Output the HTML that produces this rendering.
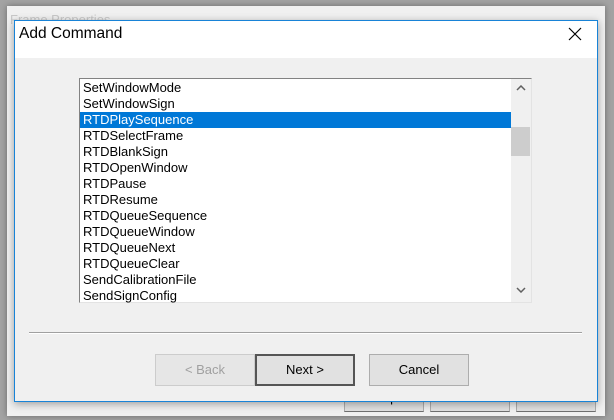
<!DOCTYPE html>
<html><head><style>
body{margin:0;width:614px;height:420px;background:#a3a3a3;position:relative;overflow:hidden;font-family:"Liberation Sans",sans-serif;}
.abs{position:absolute;box-sizing:border-box;}
.pbtn{background:#e1e1e1;border:1px solid #adadad;border-bottom-color:#707070;font-size:13px;text-align:center;line-height:22px;color:#000;}
.btn{background:#e1e1e1;border:1px solid #adadad;font-size:13px;text-align:center;line-height:30px;color:#000;}
.list div{height:16px;line-height:16px;font-size:13px;padding-left:3px;color:#000;white-space:nowrap;}
</style></head><body>
<div class="abs" style="left:7px;top:6px;width:598px;height:410px;background:#f0f0f0;box-shadow:0 0 6px rgba(0,0,0,.35);"></div>
<div class="abs" style="left:10px;top:12px;font-size:13px;color:#c8c8c8;">Frame Properties</div>
<div class="abs pbtn" style="left:344px;top:386px;width:80px;height:26px;">Help</div>
<div class="abs pbtn" style="left:430px;top:386px;width:80px;height:26px;">OK</div>
<div class="abs pbtn" style="left:516px;top:386px;width:80px;height:26px;">Cancel</div>
<div class="abs" style="left:14px;top:20px;width:584px;height:382px;background:#f0f0f0;border:1px solid #1883d7;box-shadow:0 2px 8px rgba(0,0,0,.35);">
<div class="abs" style="left:0;top:0;width:582px;height:37px;background:#fff;"></div>
<div class="abs" style="left:4px;top:4px;font-size:15.5px;color:#000;">Add Command</div>
<svg class="abs" style="left:553px;top:6px" width="14" height="14"><path d="M1 1L13 13M13 1L1 13" stroke="#000" stroke-width="1.2"/></svg>
</div>
<div class="abs" style="left:79px;top:78px;width:453px;height:225px;background:#fff;border:1px solid #828282;border-right-color:#e3e3e3;border-bottom-color:#e3e3e3;">
<div class="list" style="position:absolute;left:0;top:1px;width:431px;">
<div>SetWindowMode</div><div>SetWindowSign</div>
<div style="background:#0078d7;color:#fff">RTDPlaySequence</div>
<div>RTDSelectFrame</div><div>RTDBlankSign</div><div>RTDOpenWindow</div><div>RTDPause</div><div>RTDResume</div><div>RTDQueueSequence</div><div>RTDQueueWindow</div><div>RTDQueueNext</div><div>RTDQueueClear</div><div>SendCalibrationFile</div><div>SendSignConfig</div>
</div>
<div class="abs" style="left:431px;top:0;width:20px;height:223px;background:#f0f0f0;"></div>
<div class="abs" style="left:431px;top:48px;width:19px;height:29px;background:#cdcdcd;"></div>
<svg class="abs" style="left:436px;top:6px" width="10" height="6"><path d="M1 5L5 1L9 5" stroke="#606060" stroke-width="1.5" fill="none"/></svg>
<svg class="abs" style="left:436px;top:208px" width="10" height="6"><path d="M1 1L5 5L9 1" stroke="#606060" stroke-width="1.5" fill="none"/></svg>
</div>
<div class="abs" style="left:29px;top:332px;width:553px;height:1px;background:#a0a0a0;"></div>
<div class="abs" style="left:29px;top:333px;width:553px;height:1px;background:#fff;"></div>
<div class="abs btn" style="left:155px;top:354px;width:100px;height:32px;background:#e6e6e6;border-color:#cccccc;color:#a0a0a0;">&lt; Back</div>
<div class="abs btn" style="left:255px;top:354px;width:100px;height:32px;border:2px solid #555;line-height:28px;">Next &gt;</div>
<div class="abs btn" style="left:369px;top:354px;width:100px;height:32px;">Cancel</div>
</body></html>
